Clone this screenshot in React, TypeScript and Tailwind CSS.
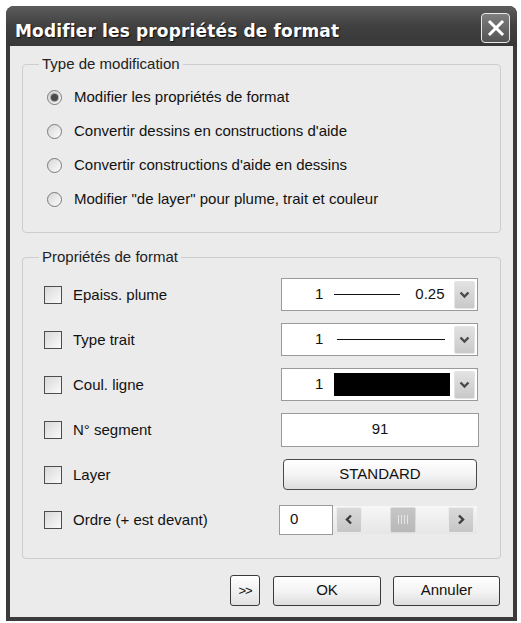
import React from "react";

function Radio({ checked }: { checked?: boolean }) {
  return (
    <div className="w-[15px] h-[15px] rounded-full border border-[#7a7a7a] bg-linear-to-br from-[#d6d6d6] to-[#fdfdfd] flex items-center justify-center shrink-0">
      {checked && <div className="w-[7px] h-[7px] rounded-full bg-[#4a4a4a] shadow-[0_0_1px_1px_#a0a0a0]" />}
    </div>
  );
}

function Check() {
  return <div className="w-[18px] h-[18px] border border-[#4d4d4d] bg-linear-to-br from-[#d9d9d9] to-[#fafafa] shrink-0" />;
}

function DropBtn() {
  return (
    <div className="ml-auto w-[21px] h-[28px] rounded-[2px] border border-[#e4e4e4] bg-linear-to-b from-[#e2e2e2] to-[#c9c9c9] flex items-center justify-center">
      <svg width="11" height="8" viewBox="0 0 11 8">
        <polyline points="1.5,1.5 5.5,5.5 9.5,1.5" fill="none" stroke="#4a4a4a" strokeWidth="2.4" />
      </svg>
    </div>
  );
}

function Row({ label, children }: { label: string; children: React.ReactNode }) {
  return (
    <div className="h-[45px] flex items-center justify-between">
      <div className="flex items-center gap-[11px]">
        <Check />
        <span className="leading-[18px]">{label}</span>
      </div>
      {children}
    </div>
  );
}

function ArrowBtn({ dir }: { dir: "l" | "r" }) {
  return (
    <div className="w-[26px] h-[26px] rounded-[2px] border border-[#ececec] bg-linear-to-b from-[#d9d9d9] to-[#c6c6c6] flex items-center justify-center">
      <svg width="8" height="11" viewBox="0 0 8 11">
        {dir === "l" ? (
          <polyline points="6,1.5 2,5.5 6,9.5" fill="none" stroke="#3d3d3d" strokeWidth="2.4" />
        ) : (
          <polyline points="2,1.5 6,5.5 2,9.5" fill="none" stroke="#3d3d3d" strokeWidth="2.4" />
        )}
      </svg>
    </div>
  );
}

export default function App() {
  return (
    <div className="w-[521px] h-[623px] bg-white pt-[6px] pl-[6px] font-['Liberation_Sans',Arial,sans-serif] text-[15px] text-[#111]">
      <div className="w-[511px] h-[615px] rounded-t-[8px] bg-[#3b3b3b] flex flex-col overflow-hidden">
        {/* Title bar */}
        <div className="h-[40px] shrink-0 flex items-start justify-between pl-[9px] pr-[7px] bg-linear-to-b from-[#5c5c5c] via-[#404040] to-[#383838]">
          <div className="mt-[15px] leading-[20px] font-['DejaVu_Sans',sans-serif] font-bold text-[17px] tracking-[0.15px] text-white [text-shadow:1px_1px_1px_#111]">
            Modifier les propriétés de format
          </div>
          <div className="mt-[7px] w-[29px] h-[30px] rounded-[4px] border-[1.5px] border-[#e8e8e8] bg-linear-to-b from-[#7e7e7e] to-[#535353] flex items-center justify-center">
            <svg width="18" height="18" viewBox="0 0 18 18">
              <line x1="3" y1="3" x2="15" y2="15" stroke="white" strokeWidth="3" strokeLinecap="square" />
              <line x1="15" y1="3" x2="3" y2="15" stroke="white" strokeWidth="3" strokeLinecap="square" />
            </svg>
          </div>
        </div>

        {/* Body */}
        <div className="flex-1 mx-[4px] mb-[4px] bg-[#ebebeb] pt-[10px] px-[12px] flex flex-col">
          <fieldset className="border border-[#cdcdcd] rounded-[4px]">
            <legend className="ml-[16px] px-[3px] leading-[16px] text-[#222]">Type de modification</legend>
            <div className="pt-[8px] pb-[16px] pl-[24px]">
              {[
                "Modifier les propriétés de format",
                "Convertir dessins en constructions d'aide",
                "Convertir constructions d'aide en dessins",
                "Modifier \"de layer\" pour plume, trait et couleur",
              ].map((t, i) => (
                <div key={i} className="h-[34px] flex items-center gap-[12px]">
                  <Radio checked={i === 0} />
                  <span className="leading-[18px]">{t}</span>
                </div>
              ))}
            </div>
          </fieldset>

          <fieldset className="mt-[16px] border border-[#cdcdcd] rounded-[4px]">
            <legend className="ml-[16px] px-[3px] leading-[16px] text-[#222]">Propriétés de format</legend>
            <div className="pt-[7px] pb-[16px] pl-[21px] pr-[22px]">
              <Row label="Epaiss. plume">
                <div className="w-[197px] h-[33px] border border-[#9a9a9a] bg-white flex items-center pl-[33px] pr-[2px]">
                  <span>1</span>
                  <div className="ml-[11px] w-[66px] h-px bg-[#111]" />
                  <span className="ml-[15px]">0.25</span>
                  <DropBtn />
                </div>
              </Row>
              <Row label="Type trait">
                <div className="w-[197px] h-[33px] border border-[#9a9a9a] bg-white flex items-center pl-[33px] pr-[2px]">
                  <span>1</span>
                  <div className="ml-[14px] w-[108px] h-px bg-[#111]" />
                  <DropBtn />
                </div>
              </Row>
              <Row label="Coul. ligne">
                <div className="w-[197px] h-[33px] border border-[#9a9a9a] bg-white flex items-center pl-[33px] pr-[2px]">
                  <span>1</span>
                  <div className="ml-[11px] w-[116px] h-[23px] bg-black" />
                  <DropBtn />
                </div>
              </Row>
              <Row label="N° segment">
                <div className="w-[198px] h-[34px] -mr-[1px] border border-[#9a9a9a] bg-white flex items-center justify-center">
                  91
                </div>
              </Row>
              <Row label="Layer">
                <div className="w-[194px] h-[31px] mr-[1px] rounded-[4px] border border-[#4a4a4a] bg-linear-to-b from-white via-[#f4f4f4] to-[#dedede] flex items-center justify-center">
                  STANDARD
                </div>
              </Row>
              <Row label="Ordre (+ est devant)">
                <div className="mr-[1px] flex items-center">
                  <div className="w-[54px] h-[30px] border border-[#9a9a9a] bg-white flex items-center pl-[10px]">0</div>
                  <div className="w-[144px] h-[28px] flex items-center px-[3px] bg-linear-to-b from-[#f7f7f7] to-[#e6e6e6]">
                    <ArrowBtn dir="l" />
                    <div className="ml-[28px] w-[26px] h-[26px] rounded-[2px] border border-[#dcdcdc] bg-linear-to-b from-[#c6c6c6] to-[#b8b8b8] flex items-center justify-center gap-[2px]">
                      <div className="w-px h-[9px] bg-[#e6e6e6]" />
                      <div className="w-px h-[9px] bg-[#e6e6e6]" />
                      <div className="w-px h-[9px] bg-[#e6e6e6]" />
                      <div className="w-px h-[9px] bg-[#e6e6e6]" />
                    </div>
                    <div className="ml-auto">
                      <ArrowBtn dir="r" />
                    </div>
                  </div>
                </div>
              </Row>
            </div>
          </fieldset>

          <div className="mt-[16px] flex justify-end items-center pr-[1px]">
            <div className="w-[30px] h-[31px] rounded-[3px] border border-[#3a3a3a] bg-linear-to-b from-white to-[#e2e2e2] flex items-center justify-center text-[13px] tracking-[-1px]">
              &gt;&gt;
            </div>
            <div className="ml-[13px] w-[108px] h-[30px] rounded-[3px] border border-[#3a3a3a] bg-linear-to-b from-white via-[#f4f4f4] to-[#dedede] flex items-center justify-center">
              OK
            </div>
            <div className="ml-[12px] w-[107px] h-[30px] rounded-[3px] border border-[#3a3a3a] bg-linear-to-b from-white via-[#f4f4f4] to-[#dedede] flex items-center justify-center">
              Annuler
            </div>
          </div>
        </div>
      </div>
    </div>
  );
}
